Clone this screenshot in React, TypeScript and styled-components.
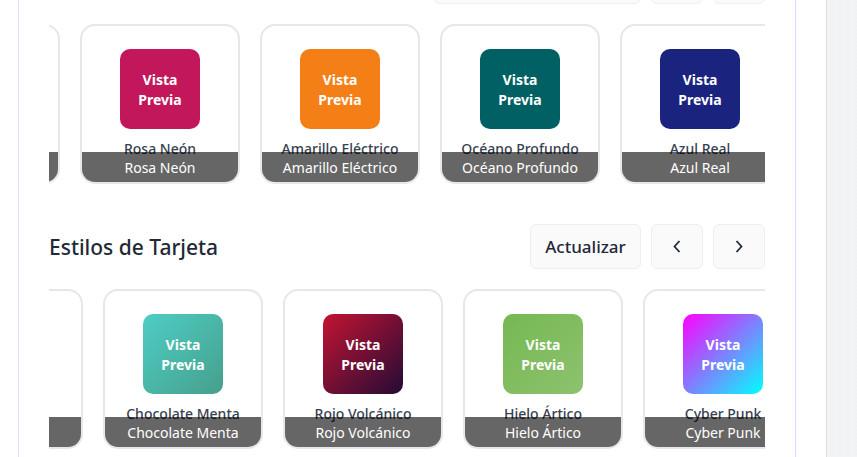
import React, { useLayoutEffect, useRef } from "react";
import styled, { createGlobalStyle } from "styled-components";

const GlobalStyle = createGlobalStyle`
  *, *::before, *::after { box-sizing: border-box; }
  body {
    margin: 0;
    font-family: "Segoe UI", "Noto Sans", "Open Sans", sans-serif;
    color: #1f2937;
  }
  button { font-family: inherit; cursor: pointer; }
`;

const Page = styled.div`
  height: 100vh;
  overflow: hidden;
  padding-right: 30px;
  background: repeating-conic-gradient(from 45deg, #f1f2f4 0 25%, #f3f4f6 0 50%) 0 0 / 8px 8px;
`;

const Sheet = styled.main`
  height: 100%;
  padding: 0 30px 0 18px;
  background: #fff;
  border-right: 1px solid #dcdee2;
`;

const Panel = styled.div`
  height: 100%;
  display: flex;
  flex-direction: column;
  justify-content: flex-end;
  gap: 40px;
  padding: 0 30px 8px;
  border: solid #e9d5ff;
  border-width: 0 1px;
`;

const Section = styled.section`
  display: flex;
  flex-direction: column;
  flex-shrink: 0;
  gap: 20px;
`;

const Header = styled.header`
  display: flex;
  align-items: center;
  justify-content: space-between;
  height: 45px;
`;

const Title = styled.h2`
  margin: 0;
  font-size: 21px;
  line-height: 32px;
  font-weight: 500;
`;

const Controls = styled.div`
  display: flex;
  gap: 10px;
  height: 100%;
  margin-left: auto;
`;

const ControlButton = styled.button<{ $width: number }>`
  display: flex;
  align-items: center;
  justify-content: center;
  width: ${(p) => p.$width}px;
  height: 100%;
  padding: 0;
  color: #1f2937;
  background: #fafafa;
  border: 1px solid #eeeeee;
  border-radius: 6px;
  font-size: 17px;
  font-weight: 500;
`;

const Track = styled.div`
  display: flex;
  gap: 20px;
  overflow: hidden;
`;

const Card = styled.article`
  position: relative;
  display: flex;
  flex: 0 0 160px;
  flex-direction: column;
  align-items: center;
  justify-content: center;
  gap: 10px;
  height: 160px;
  overflow: hidden;
  border: 2px solid #e5e7eb;
  border-radius: 15px;
  font-size: 14px;
  line-height: 20px;
  text-align: center;
  white-space: nowrap;
`;

const Swatch = styled.div<{ $fill: string }>`
  display: flex;
  align-items: center;
  justify-content: center;
  width: 80px;
  height: 80px;
  padding: 2px 10px 0;
  color: #fff;
  background: ${(p) => p.$fill};
  border-radius: 10px;
  font-weight: 700;
  white-space: normal;
`;

const Name = styled.span`
  color: #374151;
  font-weight: 500;
`;

const Caption = styled.div`
  position: absolute;
  inset: auto 0 0;
  padding: 6px 5px 4px;
  color: #fff;
  background: rgba(0, 0, 0, 0.6);
`;

type Item = { name: string; fill: string };

const colors: Item[] = [
  { name: "Verde", fill: "#1b5e20" },
  { name: "Rosa Neón", fill: "#c2185b" },
  { name: "Amarillo Eléctrico", fill: "#f57f17" },
  { name: "Océano Profundo", fill: "#006064" },
  { name: "Azul Real", fill: "#1a237e" },
];

const styles: Item[] = [
  { name: "Clásico", fill: "#333333" },
  { name: "Chocolate Menta", fill: "linear-gradient(135deg, #4ecdc4, #45a08b)" },
  { name: "Rojo Volcánico", fill: "linear-gradient(135deg, #c31432, #240b36)" },
  { name: "Hielo Ártico", fill: "linear-gradient(135deg, #76b852, #8dc26f)" },
  { name: "Cyber Punk", fill: "linear-gradient(135deg, #ff00ff, #00ffff)" },
];

function Chevron({ points }: { points: string }) {
  return (
    <svg width="16" height="16" viewBox="0 0 16 16" fill="none" stroke="currentColor" strokeWidth="1.8" aria-hidden="true">
      <polyline points={points} />
    </svg>
  );
}

type CarouselProps = {
  title?: string;
  action?: string;
  actionWidth: number;
  start: number;
  items: Item[];
};

function Carousel({ title, action, actionWidth, start, items }: CarouselProps) {
  const track = useRef<HTMLDivElement>(null);

  useLayoutEffect(() => {
    if (track.current) track.current.scrollLeft = start;
  }, [start]);

  const move = (distance: number) => track.current?.scrollBy({ left: distance, behavior: "smooth" });

  return (
    <Section>
      <Header>
        {title && <Title>{title}</Title>}
        <Controls>
          <ControlButton type="button" $width={actionWidth}>{action}</ControlButton>
          <ControlButton type="button" $width={52} aria-label="Anterior" onClick={() => move(-180)}>
            <Chevron points="10.5,2 5.5,7.5 10.5,13" />
          </ControlButton>
          <ControlButton type="button" $width={52} aria-label="Siguiente" onClick={() => move(180)}>
            <Chevron points="5.5,2 10.5,7.5 5.5,13" />
          </ControlButton>
        </Controls>
      </Header>
      <Track ref={track}>
        {items.map((item) => (
          <Card key={item.name}>
            <Swatch $fill={item.fill}>Vista Previa</Swatch>
            <Name>{item.name}</Name>
            <Caption>{item.name}</Caption>
          </Card>
        ))}
      </Track>
    </Section>
  );
}

export default function App() {
  return (
    <>
      <GlobalStyle />
      <Page>
        <Sheet>
          <Panel>
            <Carousel actionWidth={207} start={149} items={colors} />
            <Carousel title="Estilos de Tarjeta" action="Actualizar" actionWidth={111} start={126} items={styles} />
          </Panel>
        </Sheet>
      </Page>
    </>
  );
}
